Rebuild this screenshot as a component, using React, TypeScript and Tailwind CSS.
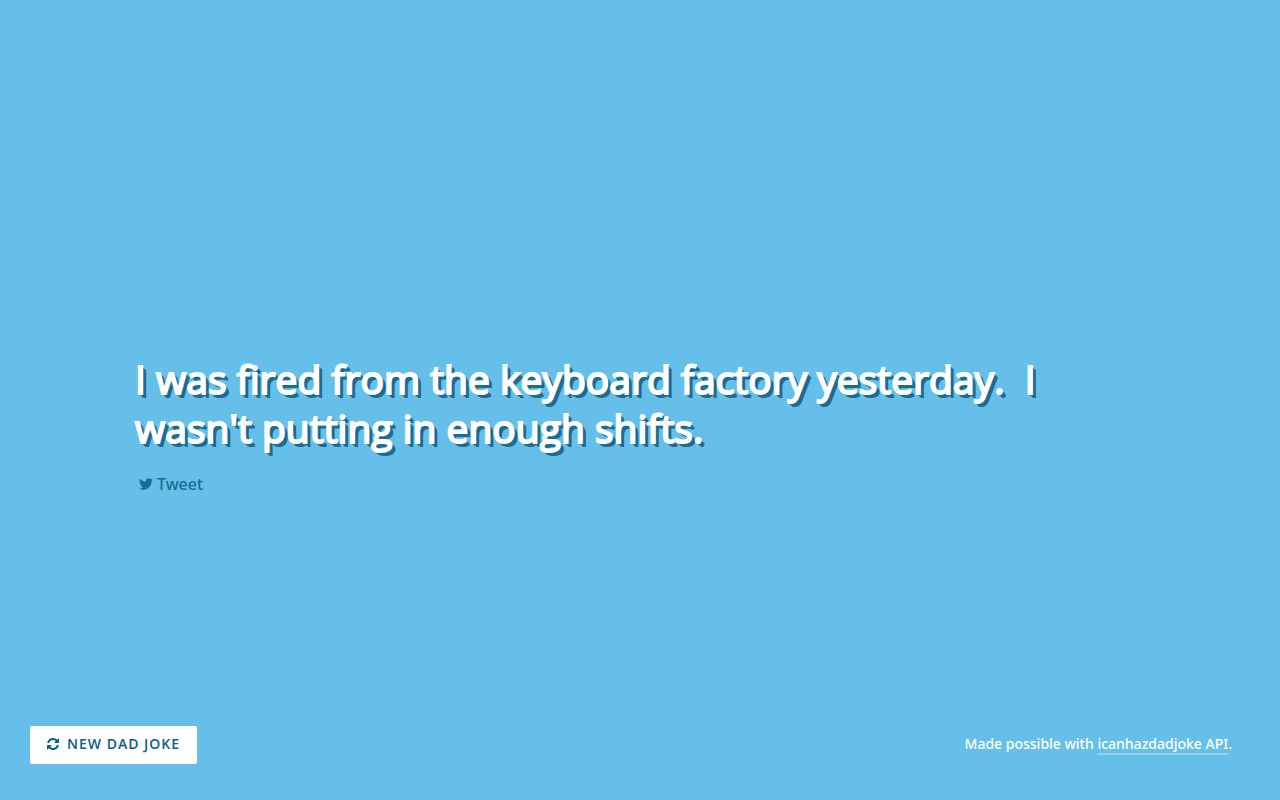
import { useState } from "react";
import { FaTwitter } from "react-icons/fa";

const JOKES = [
	"I was fired from the keyboard factory yesterday.  I wasn't putting in enough shifts.",
	"Why did the scarecrow win an award?  He was outstanding in his field.",
	"What do you call a fake noodle?  An impasta.",
];

export default function App() {
	const [index, setIndex] = useState(0);
	const joke = JOKES[index];

	return (
		<div className="flex min-h-screen flex-col bg-[#66bfe8] font-['Noto_Sans','Open_Sans',sans-serif] text-white">
			<main className="flex flex-1 flex-col items-start justify-center px-[135px] pt-[124px]">
				<h1 className="max-w-[920px] whitespace-pre-wrap font-['Open_Sans','Noto_Sans',sans-serif] text-[39px] font-normal leading-[49px] [-webkit-text-stroke:2px_white] [text-shadow:2px_2px_0_#1b6b93,3px_3px_0_#1b6b93,4px_4px_0_#1b6b93]">
					{joke}
				</h1>
				<a
					href={`https://twitter.com/intent/tweet?text=${encodeURIComponent(joke)}`}
					className="mt-5 flex items-center gap-1 px-1 text-base font-medium leading-6 text-[#1b6b93]"
				>
					<FaTwitter size={14} />
					Tweet
				</a>
			</main>
			<footer className="flex items-center justify-between px-[30px] pb-9">
				<button
					type="button"
					onClick={() => setIndex((index + 1) % JOKES.length)}
					className="flex cursor-pointer items-center gap-2 rounded-xs bg-white px-[17px] pt-2 pb-[10px] font-['Open_Sans','Noto_Sans',sans-serif] text-sm font-semibold uppercase tracking-[1px] text-[#0b5c85]"
				>
					<RefreshIcon />
					New Dad Joke
				</button>
				<p className="pr-[18px] pb-0.5 text-sm font-medium leading-5">
					Made possible with{" "}
					<a href="https://icanhazdadjoke.com/api" className="border-b-2 border-white/30">
						icanhazdadjoke API
					</a>
					.
				</p>
			</footer>
		</div>
	);
}

function RefreshIcon() {
	return (
		<svg viewBox="128 128 1536 1536" width="12" height="12" fill="currentColor" aria-hidden="true">
			<path d="M1639 1056q0 5-1 7-64 268-268 434.5t-478 166.5q-146 0-282.5-55t-243.5-157l-129 129q-19 19-45 19t-45-19-19-45v-448q0-26 19-45t45-19h448q26 0 45 19t19 45-19 45l-137 137q71 66 161 102t187 36q134 0 250-65t186-179q11-17 53-117 8-23 30-23h192q13 0 22.5 9.5t9.5 22.5zm25-800v448q0 26-19 45t-45 19h-448q-26 0-45-19t-19-45 19-45l138-138q-148-137-349-137-134 0-250 65t-186 179q-11 17-53 117-8 23-30 23h-199q-13 0-22.5-9.5t-9.5-22.5v-7q65-268 270-434.5t478-166.5q146 0 284 55.5t245 156.5l130-129q19-19 45-19t45 19 19 45z" />
		</svg>
	);
}
